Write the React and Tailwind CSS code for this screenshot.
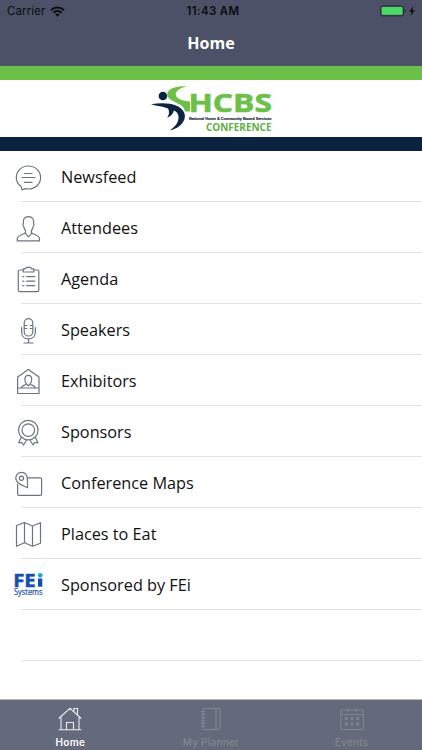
import React from 'react';

const RowIcon = ({ children }) => (
  <svg
    className="w-8 h-[50px] shrink-0"
    viewBox="0 0 32 50"
    fill="none"
    stroke="#6c7480"
    strokeWidth="1.2"
    strokeLinecap="round"
    strokeLinejoin="round"
  >
    {children}
  </svg>
);

const NewsfeedIcon = () => (
  <RowIcon>
    <path d="M10 38.900c-.1-1.100-.3-2.400-.9-3.400C5.900 33.500 4.300 30.300 4.300 26.600 4.300 20.100 9.500 15 16.400 15S28.600 20.100 28.600 26.600 23.300 38 16.400 38c-1.200 0-2.200-.2-3.200-.4-1 .6-2.100 1.100-3.200 1.300z" />
    <path d="M12.500 22.500h7.500M10 26.500h13M12.500 31.300h7.500" />
  </RowIcon>
);

const AttendeesIcon = () => (
  <RowIcon>
    <path d="M13.500 28.500c-1.200-1.200-1.600-2.600-1.800-4.100-.9-.6-1.100-2.200-.3-2.900-.6-4.200 1.200-6.900 5.100-6.900s5.700 2.700 5 6.900c.8.700.6 2.300-.3 2.900-.2 1.500-.6 2.900-1.800 4.100v2.200c1.500 2.200 8 1.700 8.100 6.300v1.800H5.200V37c.1-4.600 6.800-4.100 8.300-6.300z" />
    <path d="M13.200 31.200l3.300 3.600 3.300-3.600" />
  </RowIcon>
);

const AgendaIcon = () => (
  <RowIcon>
    <path d="M11 17H7.800c-1 0-1.500.6-1.500 1.500v18.700c0 .9.600 1.500 1.500 1.500h17.500c.9 0 1.500-.6 1.500-1.500V18.500c0-.9-.6-1.500-1.500-1.500H22" />
    <path d="M11.200 19v-3.200h2.300c.2-1.100.9-1.500 1.700-1.500h2.600c.8 0 1.500.4 1.700 1.500h2.300V19z" />
    <path d="M10.700 23.700h1.200M14.700 23.700h8M10.700 28.200h1.200M14.700 28.200h8M10.700 32.700h1.200M14.700 32.700h8" />
  </RowIcon>
);

const SpeakersIcon = () => (
  <RowIcon>
    <rect x="12.200" y="14.700" width="8.600" height="17.300" rx="4.300" />
    <path d="M9.600 23.500v4.200c0 4.500 3 7.200 6.900 7.200s6.900-2.700 6.900-7.200v-4.200M16.500 34.900v4M12 39h9" />
    <path d="M12.500 21.500h2.300M18.200 21.500h2.300M12.500 24.500h2.300M18.200 24.500h2.300" />
  </RowIcon>
);

const ExhibitorsIcon = () => (
  <RowIcon>
    <path d="M5.600 38.500V22L16.300 14.400 27 22v16.500zM5.600 33H27" />
    <path d="M9.600 33c-.1-3.100 3.700-2.500 4.900-4-1.300-1.300-1.600-2.600-1.600-4.600 0-2.500 1.300-4 3.400-4s3.400 1.500 3.400 4c0 2-.3 3.300-1.600 4.600 1.200 1.500 5 .9 4.900 4M14.500 29.300l1.800 1.500 1.800-1.500" />
  </RowIcon>
);

const SponsorsIcon = () => (
  <RowIcon>
    <circle cx="16.300" cy="24.100" r="9.800" />
    <circle cx="16.300" cy="24.100" r="6.300" />
    <path d="M9.300 31.300L6.700 36.800l3.300-.3 1.500 2.500 3.200-5M23.300 31.300l2.600 5.500-3.300-.3-1.500 2.500-3.200-5" />
  </RowIcon>
);

const MapsIcon = () => (
  <RowIcon>
    <path d="M5.600 27v10c0 .8.400 1.300 1.200 1.300h21.500c.8 0 1.300-.5 1.300-1.300V22.200c0-.8-.5-1.300-1.300-1.300H16" />
    <path d="M15.500 30.800C8.900 28 3.800 25.600 3.800 21.200c0-3.300 2.400-5.800 5.600-5.800 5 0 6.100 4 6.100 8z" />
    <circle cx="9.500" cy="21.300" r="2.100" />
  </RowIcon>
);

const PlacesIcon = () => (
  <RowIcon>
    <path d="M4.500 17.500l8-3 8 3.500 8-3.300v20.500l-8 3-8-3.400-8 3.500zM12.500 14.500v20.300M20.500 18v20.200" />
  </RowIcon>
);

// sponsor logo: wordmark with a dotted "i" over the small caption
const FeiIcon = () => (
  <svg className="w-8 h-[50px] shrink-0" viewBox="0 0 32 50">
    <text x="1.200" y="27.500" fontFamily="Open Sans, sans-serif" fontWeight="700" fontSize="18" textLength="22.500" lengthAdjust="spacingAndGlyphs" fill="#1450b0" stroke="#1450b0" strokeWidth=".5">FE</text>
    <path d="M26 19.500h4.300v8.200H26z" fill="#1450b0" />
    <circle cx="28.200" cy="16.300" r="2.400" fill="#1ba9d8" />
    <text x="2" y="36" fontFamily="Open Sans, sans-serif" fontSize="8.200" textLength="28.500" lengthAdjust="spacingAndGlyphs" fill="#1450b0" stroke="#1450b0" strokeWidth=".2">Systems</text>
  </svg>
);

const menu = [
  { title: 'Newsfeed', icon: NewsfeedIcon },
  { title: 'Attendees', icon: AttendeesIcon },
  { title: 'Agenda', icon: AgendaIcon },
  { title: 'Speakers', icon: SpeakersIcon },
  { title: 'Exhibitors', icon: ExhibitorsIcon },
  { title: 'Sponsors', icon: SponsorsIcon },
  { title: 'Conference Maps', icon: MapsIcon },
  { title: 'Places to Eat', icon: PlacesIcon },
  { title: 'Sponsored by FEi', icon: FeiIcon },
];

const StatusBar = () => (
  <div className="h-[22px] pt-px grid grid-cols-3 items-center px-[7px] font-['Inter',sans-serif] text-[11.500px] text-[#0b0c10]">
    <div className="flex items-center gap-[5px]">
      <span className="tracking-[0.1px]">Carrier</span>
      <svg className="w-[15px] h-[11px] mb-px" viewBox="0 0 15 11" fill="none" stroke="#0b0c10" strokeWidth="2">
        <path d="M1 4.200c3.800-3.600 9.200-3.600 13 0M3.400 6.700c2.400-2.300 5.800-2.300 8.200 0" />
        <path d="M5.200 8.400c1.400-1.200 3.200-1.200 4.600 0L7.500 10.700z" fill="#0b0c10" stroke="none" />
      </svg>
    </div>
    <div className="pl-1 text-center font-semibold tracking-[0.35px] whitespace-nowrap">11:43 AM</div>
    <svg className="w-[37px] h-3 justify-self-end -mr-0.5 mb-px" viewBox="0 0 37 12">
      <rect x=".6" y=".9" width="23" height="10" rx="2.300" fill="none" stroke="#252a38" />
      <rect x="1.700" y="2" width="20.800" height="7.800" rx="1.200" fill="#4cd964" />
      <path d="M24.800 4.300c1.300.4 1.300 2.900 0 3.300z" fill="#252a38" />
      <path d="M33.300 1L29.300 6.700h2.400L30.600 11l4.200-5.700h-2.500z" fill="#0b0c10" />
    </svg>
  </div>
);

const Banner = () => (
  <div className="h-[85px] bg-white border-t-[14px] border-t-[#6cc04a] border-b-[14px] border-b-[#0b2341] flex justify-center">
    <svg className="w-[124px] h-[57px]" viewBox="0 0 124 57">
      <circle cx="13.900" cy="16" r="4.300" fill="#0b2341" />
      <path d="M2 24.200c9-1.500 18.500-1.600 25 1.300 7.500 3.400 10.300 8.500 8.300 14-2 5.300-7.500 9.500-14.300 10.800 5.500-3.800 9-8.500 8.500-13.800-.3-3-2-5-4.500-6-.8 3.300-3.500 6-6.800 7.300 2-3 2.500-6.300.8-9.300-4.500-2-11-2.500-17-4.300z" fill="#0b2341" />
      <path d="M38 6.300C28.500 5.400 18.200 8.200 18.200 14.500c0 5.500 9.500 7.300 14.800 11.500 1.800 1.500 2.600 3.300 3 5.500h5V21.500c-7.500-.8-13.500-2.500-14.200-6.500-.6-4 4.200-6.900 11.200-8.700z" fill="#6cc04a" />
      <text x="39.500" y="31.800" fontFamily="Open Sans, sans-serif" fontWeight="700" fontSize="25.500" textLength="83.500" lengthAdjust="spacingAndGlyphs" fill="#6cc04a" stroke="#6cc04a" strokeWidth=".6">HCBS</text>
      <text x="40" y="40.400" fontFamily="Liberation Sans, Arial, sans-serif" fontWeight="700" fontSize="4.100" textLength="82.500" lengthAdjust="spacingAndGlyphs" fill="#0b2341" stroke="#0b2341" strokeWidth=".15">National Home &amp; Community Based Services</text>
      <text x="57" y="50.700" fontFamily="Open Sans, sans-serif" fontWeight="700" fontSize="10.300" textLength="65.500" lengthAdjust="spacingAndGlyphs" fill="#5fb043">CONFERENCE</text>
    </svg>
  </div>
);

const TabBar = () => (
  <nav className="h-[51px] shrink-0 grid grid-cols-3 bg-[#65697c] border-t border-[#b4b6c0] font-['Inter',sans-serif] text-[10px] leading-3 font-medium tracking-[0.25px] text-[#83858f]">
    <div className="flex flex-col items-center pt-[7px] gap-[5px] text-white">
      <svg className="w-6 h-6" viewBox="0 0 24 24" fill="none" stroke="#e9eaf0" strokeWidth="1.100">
        <path d="M.7 11.500L12 1.300l11.300 10.200M3 9.500v13M21 9.500v13M.5 22.700h23M8.500 22.500v-7h7v7M16 4.800V1.500h3.500V8M15.300 1.500h5" />
      </svg>
      <span className="font-semibold">Home</span>
    </div>
    <div className="flex flex-col items-center pt-[7px] gap-[5px]">
      <svg className="w-6 h-6" viewBox="0 0 24 24" fill="none" stroke="#83858f" strokeWidth="1.100">
        <rect x="4" y="1.500" width="17" height="21" rx="1.500" />
        <path d="M17 1.500v21M2 4.500h4M2 7.500h4M2 10.500h4M2 13.500h4M2 16.500h4M2 19.500h4" />
      </svg>
      <span>My Planner</span>
    </div>
    <div className="flex flex-col items-center pt-[7px] gap-[5px]">
      <svg className="w-6 h-6" viewBox="0 0 24 24" fill="none" stroke="#83858f" strokeWidth="1.100">
        <rect x=".8" y="3" width="22.500" height="19.500" rx="1.500" />
        <path d="M.8 7.500h22.500M8 1v4M16 1v4" />
        <path d="M5.300 10.500h2v2h-2zM11 10.500h2v2h-2zM16.700 10.500h2v2h-2zM5.300 16h2v2h-2zM11 16h2v2h-2zM16.700 16h2v2h-2z" />
      </svg>
      <span>Events</span>
    </div>
  </nav>
);

const App = () => {
  return (
    <div className="w-full h-screen flex flex-col overflow-hidden bg-white font-['Open_Sans',sans-serif]">
      <header className="h-[66px] shrink-0 bg-[#4c5167]">
        <StatusBar />
        <h1 className="h-[42px] flex items-center justify-center text-base font-bold text-white">Home</h1>
      </header>
      <Banner />
      <main className="flex-1 min-h-0 overflow-hidden">
        {menu.map(({ title, icon: Icon }) => (
          <div key={title} className="h-[51px] flex flex-col">
            <div className="h-[50px] flex items-center pl-3 gap-[17px]">
              <Icon />
              <span className="pt-px text-[16.250px] leading-6 text-[#111111] whitespace-nowrap">{title}</span>
            </div>
            <div className="h-px ml-[21px] bg-[#e2e3e5]" />
          </div>
        ))}
        <div className="h-[51px] ml-[21px] border-b border-[#e2e3e5]" />
      </main>
      <TabBar />
    </div>
  );
};

export default App;
